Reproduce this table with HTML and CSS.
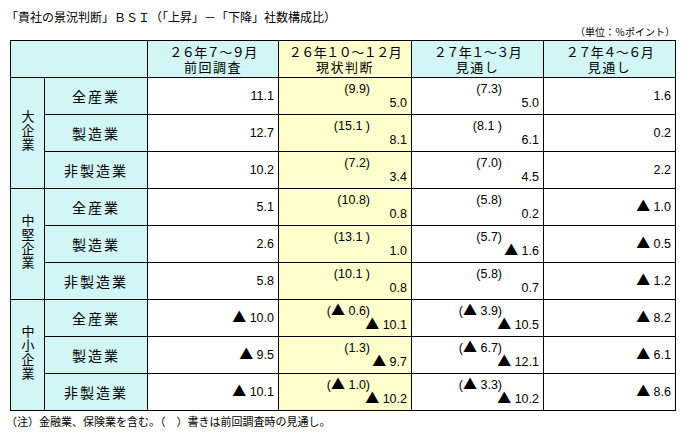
FILE: index.html
```html
<!DOCTYPE html>
<html lang="ja">
<head>
<meta charset="utf-8">
<link rel="stylesheet" href="styles.css">
</head>
<body>
<div class="sheet">
  <div class="title">「貴社の景況判断」ＢＳＩ（「上昇」－「下降」社数構成比）</div>
  <div class="unit">（単位：％ポイント）</div>
  <table class="bsi">
    <colgroup>
      <col class="c-grp"><col class="c-ind"><col class="c-a"><col class="c-b"><col class="c-c"><col class="c-d">
    </colgroup>
    <thead>
      <tr>
        <th class="hd" colspan="2"></th>
        <th class="hd"><span class="period">２６年７～９月</span><br><span class="kind">前回調査</span></th>
        <th class="hd cur"><span class="period">２６年１０～１２月</span><br><span class="kind">現状判断</span></th>
        <th class="hd"><span class="period">２７年１～３月</span><br><span class="kind">見通し</span></th>
        <th class="hd"><span class="period">２７年４～６月</span><br><span class="kind">見通し</span></th>
      </tr>
    </thead>
    <tbody>
      <tr>
        <th class="grp" rowspan="3"><span class="vt">大企業</span></th>
        <th class="ind">全産業</th>
        <td class="num">11.1</td>
        <td class="dual cur"><div class="prev">(9.9)</div><div class="val">5.0</div></td>
        <td class="dual"><div class="prev">(7.3)</div><div class="val">5.0</div></td>
        <td class="num">1.6</td>
      </tr>
      <tr>
        <th class="ind">製造業</th>
        <td class="num">12.7</td>
        <td class="dual cur"><div class="prev">(15.1 )</div><div class="val">8.1</div></td>
        <td class="dual"><div class="prev">(8.1 )</div><div class="val">6.1</div></td>
        <td class="num">0.2</td>
      </tr>
      <tr>
        <th class="ind">非製造業</th>
        <td class="num">10.2</td>
        <td class="dual cur"><div class="prev">(7.2)</div><div class="val">3.4</div></td>
        <td class="dual"><div class="prev">(7.0)</div><div class="val">4.5</div></td>
        <td class="num">2.2</td>
      </tr>
      <tr>
        <th class="grp" rowspan="3"><span class="vt">中堅企業</span></th>
        <th class="ind">全産業</th>
        <td class="num">5.1</td>
        <td class="dual cur"><div class="prev">(10.8)</div><div class="val">0.8</div></td>
        <td class="dual"><div class="prev">(5.8)</div><div class="val">0.2</div></td>
        <td class="num"><span class="tri">▲</span> 1.0</td>
      </tr>
      <tr>
        <th class="ind">製造業</th>
        <td class="num">2.6</td>
        <td class="dual cur"><div class="prev">(13.1 )</div><div class="val">1.0</div></td>
        <td class="dual"><div class="prev">(5.7)</div><div class="val"><span class="tri">▲</span> 1.6</div></td>
        <td class="num"><span class="tri">▲</span> 0.5</td>
      </tr>
      <tr>
        <th class="ind">非製造業</th>
        <td class="num">5.8</td>
        <td class="dual cur"><div class="prev">(10.1 )</div><div class="val">0.8</div></td>
        <td class="dual"><div class="prev">(5.8)</div><div class="val">0.7</div></td>
        <td class="num"><span class="tri">▲</span> 1.2</td>
      </tr>
      <tr>
        <th class="grp" rowspan="3"><span class="vt">中小企業</span></th>
        <th class="ind">全産業</th>
        <td class="num"><span class="tri">▲</span> 10.0</td>
        <td class="dual cur"><div class="prev">(<span class="tri">▲</span> 0.6)</div><div class="val"><span class="tri">▲</span> 10.1</div></td>
        <td class="dual"><div class="prev">(<span class="tri">▲</span> 3.9)</div><div class="val"><span class="tri">▲</span> 10.5</div></td>
        <td class="num"><span class="tri">▲</span> 8.2</td>
      </tr>
      <tr>
        <th class="ind">製造業</th>
        <td class="num"><span class="tri">▲</span> 9.5</td>
        <td class="dual cur"><div class="prev">(1.3)</div><div class="val"><span class="tri">▲</span> 9.7</div></td>
        <td class="dual"><div class="prev">(<span class="tri">▲</span> 6.7)</div><div class="val"><span class="tri">▲</span> 12.1</div></td>
        <td class="num"><span class="tri">▲</span> 6.1</td>
      </tr>
      <tr>
        <th class="ind">非製造業</th>
        <td class="num"><span class="tri">▲</span> 10.1</td>
        <td class="dual cur"><div class="prev">(<span class="tri">▲</span> 1.0)</div><div class="val"><span class="tri">▲</span> 10.2</div></td>
        <td class="dual"><div class="prev">(<span class="tri">▲</span> 3.3)</div><div class="val"><span class="tri">▲</span> 10.2</div></td>
        <td class="num"><span class="tri">▲</span> 8.6</td>
      </tr>
    </tbody>
  </table>
  <div class="note">（注）金融業、保険業を含む。（　）書きは前回調査時の見通し。</div>
</div>
</body>
</html>
```

FILE: styles.css
```css
html, body {
  margin: 0;
  padding: 0;
  background: #ffffff;
}

body {
  font-family: "Noto Sans CJK JP", "Liberation Sans", sans-serif;
  color: #000000;
}

.sheet {
  width: 665px;
  margin-left: 10px;
  padding-top: 10px;
}

.title {
  margin-left: -4px;
  font-size: 12px;
  line-height: 14px;
  white-space: nowrap;
}

.unit {
  margin-top: 2px;
  font-size: 10px;
  line-height: 12px;
  text-align: right;
}

.bsi {
  margin-top: 2px;
  width: 665px;
  table-layout: fixed;
  border-collapse: collapse;
  border: 1px solid #000;
}

.c-grp { width: 34px; }
.c-ind { width: 103px; }
.c-a { width: 131px; }
.c-b { width: 133px; }
.c-c { width: 132px; }
.c-d { width: 132px; }

.bsi th, .bsi td {
  border: 1px solid #000;
  padding: 0;
  height: 37px;
  box-sizing: border-box;
}

.hd {
  background: #d2f6f6;
  font-family: "Noto Sans CJK JP", sans-serif;
  font-weight: normal;
  font-size: 13px;
  line-height: 15px;
  text-align: center;
  vertical-align: middle;
  padding-top: 2px;
}

.period {
  letter-spacing: -0.5px;
}

.kind {
  letter-spacing: 1.5px;
}

.bsi .hd.cur,
.bsi td.cur {
  background: #ffffcc;
}

.grp {
  background: #d2f6f6;
  font-weight: normal;
  font-size: 13px;
  text-align: center;
  vertical-align: middle;
}

.vt {
  display: inline-block;
  writing-mode: vertical-rl;
  text-orientation: upright;
  letter-spacing: 1px;
  line-height: 16px;
}

.ind {
  background: #d2f6f6;
  font-weight: normal;
  font-size: 14px;
  letter-spacing: 2px;
  text-align: center;
  vertical-align: middle;
  padding-top: 2px;
}

.num {
  font-family: "Liberation Sans", "Noto Sans CJK JP", sans-serif;
  font-size: 12.5px;
  text-align: right;
  vertical-align: middle;
  padding-top: 2px;
}

.bsi td.num { padding-right: 4px; }

.dual {
  font-family: "Liberation Sans", "Noto Sans CJK JP", sans-serif;
  font-size: 12.5px;
  line-height: 14px;
  vertical-align: middle;
  padding-top: 2px;
}

.prev {
  text-align: right;
  padding-right: 41px;
}

.val {
  text-align: right;
  padding-right: 4px;
}

.tri {
  font-family: "Noto Sans CJK JP", sans-serif;
  font-size: 14px;
  line-height: 10px;
}

.note {
  margin-top: 4px;
  margin-left: -4px;
  font-size: 11px;
  line-height: 13px;
  white-space: nowrap;
}
```
